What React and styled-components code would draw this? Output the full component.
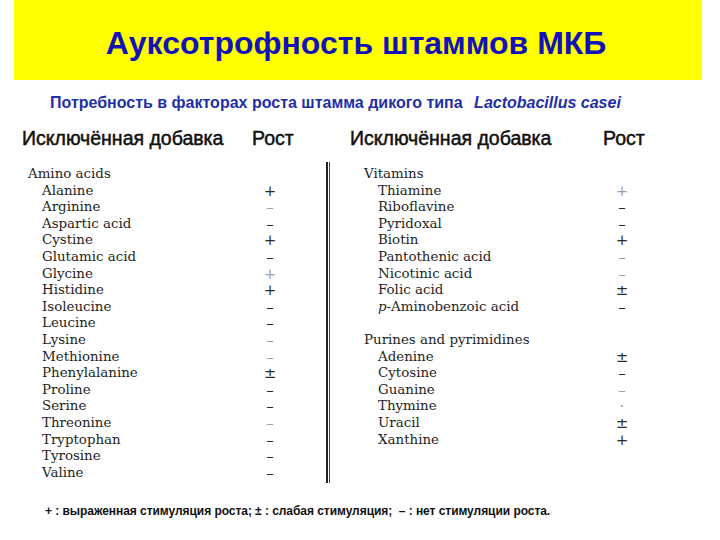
import React from 'react'
import styled, { createGlobalStyle } from 'styled-components'

const GlobalStyle = createGlobalStyle`
  html, body {
    margin: 0;
    padding: 0;
    background: #fff;
  }
  body {
    font-family: "Liberation Sans", Arial, sans-serif;
  }
  * {
    box-sizing: border-box;
  }
`

const aminoAcids = [
  ['Alanine', '+'],
  ['Arginine', '–', true],
  ['Aspartic acid', '–'],
  ['Cystine', '+'],
  ['Glutamic acid', '–'],
  ['Glycine', '+', true],
  ['Histidine', '+'],
  ['Isoleucine', '–'],
  ['Leucine', '–'],
  ['Lysine', '–', true],
  ['Methionine', '–', true],
  ['Phenylalanine', '±'],
  ['Proline', '–'],
  ['Serine', '–'],
  ['Threonine', '–', true],
  ['Tryptophan', '–'],
  ['Tyrosine', '–'],
  ['Valine', '–'],
]

const vitamins = [
  ['Thiamine', '+', true],
  ['Riboflavine', '–'],
  ['Pyridoxal', '–'],
  ['Biotin', '+'],
  ['Pantothenic acid', '–', true],
  ['Nicotinic acid', '–', true],
  ['Folic acid', '±'],
  [<><i>p</i>-Aminobenzoic acid</>, '–'],
]

const purines = [
  ['Adenine', '±'],
  ['Cytosine', '–'],
  ['Guanine', '–', true],
  ['Thymine', '·', true],
  ['Uracil', '±'],
  ['Xanthine', '+'],
]

const Page = styled.div`
  width: 720px;
  height: 540px;
  overflow: hidden;
`

const Banner = styled.header`
  height: 80px;
  margin: 0 18px 0 14px;
  padding-top: 6px;
  background: #ffff00;
  display: flex;
  align-items: center;
  justify-content: center;
`

const Title = styled.h1`
  margin: 0 0 0 -4px;
  font-size: 32px;
  font-weight: bold;
  color: #1212b8;
`

const Subtitle = styled.p`
  margin: 15px 0 0 50px;
  font-size: 16px;
  font-weight: bold;
  color: #1f2fa8;
  line-height: 16px;
  white-space: nowrap;

  i {
    margin-left: 7px;
  }
`

const HeaderRow = styled.div`
  display: grid;
  grid-template-columns: 230px 98px 253px auto;
  padding-left: 22px;
  margin-top: 17px;
  font-size: 19.5px;
  line-height: 20px;
  color: #111;
  white-space: nowrap;
  -webkit-text-stroke: 0.5px #111;
`

const Tables = styled.div`
  display: flex;
  margin-top: 14px;
`

const Column = styled.div`
  width: ${(p) => p.$width}px;
  padding-left: ${(p) => p.$pad}px;
  padding-top: 4px;
  flex-shrink: 0;
`

const Divider = styled.div`
  width: 4px;
  height: 321px;
  border-left: 2px solid #222;
  border-right: 1px solid #444;
  flex-shrink: 0;
`

const Group = styled.div`
  font-family: "DejaVu Serif", "Liberation Serif", serif;
  font-size: 13.4px;
  color: #1e1e1e;
  line-height: 16.6px;
`

const Row = styled.div`
  display: grid;
  grid-template-columns: ${(p) => p.$nameWidth}px 16px;
  padding-left: ${(p) => (p.$group ? 0 : 14)}px;
  height: 16.6px;
  white-space: nowrap;
`

const Value = styled.span`
  text-align: center;
  font-size: 15px;
  color: ${(p) => (p.$faint ? '#a0a0a0' : '#2a2a2a')};
`

const Gap = styled.div`
  height: 16.6px;
`

const Legend = styled.p`
  margin: 21px 0 0 45px;
  font-size: 12px;
  font-weight: bold;
  color: #111;
  letter-spacing: -0.05px;
  white-space: nowrap;
`

const Block = ({ name, items, nameWidth }) => (
  <Group>
    <Row $group $nameWidth={nameWidth + 14}>
      {name}
    </Row>
    {items.map(([label, value, faint], i) => (
      <Row key={i} $nameWidth={nameWidth}>
        <span>{label}</span>
        <Value $faint={faint}>{value}</Value>
      </Row>
    ))}
  </Group>
)

const App = () => (
  <Page>
    <GlobalStyle />
    <Banner>
      <Title>Ауксотрофность штаммов МКБ</Title>
    </Banner>
    <Subtitle>
      Потребность в факторах роста штамма дикого типа <i>Lactobacillus casei</i>
    </Subtitle>
    <HeaderRow>
      <span>Исключённая добавка</span>
      <span>Рост</span>
      <span>Исключённая добавка</span>
      <span>Рост</span>
    </HeaderRow>
    <Tables>
      <Column $width={326} $pad={28}>
        <Block name="Amino acids" items={aminoAcids} nameWidth={220} />
      </Column>
      <Divider />
      <Column $width={380} $pad={34}>
        <Block name="Vitamins" items={vitamins} nameWidth={236} />
        <Gap />
        <Block name="Purines and pyrimidines" items={purines} nameWidth={236} />
      </Column>
    </Tables>
    <Legend>
      + : выраженная стимуляция роста; ± : слабая стимуляция;&nbsp; – : нет стимуляции роста.
    </Legend>
  </Page>
)

export default App
